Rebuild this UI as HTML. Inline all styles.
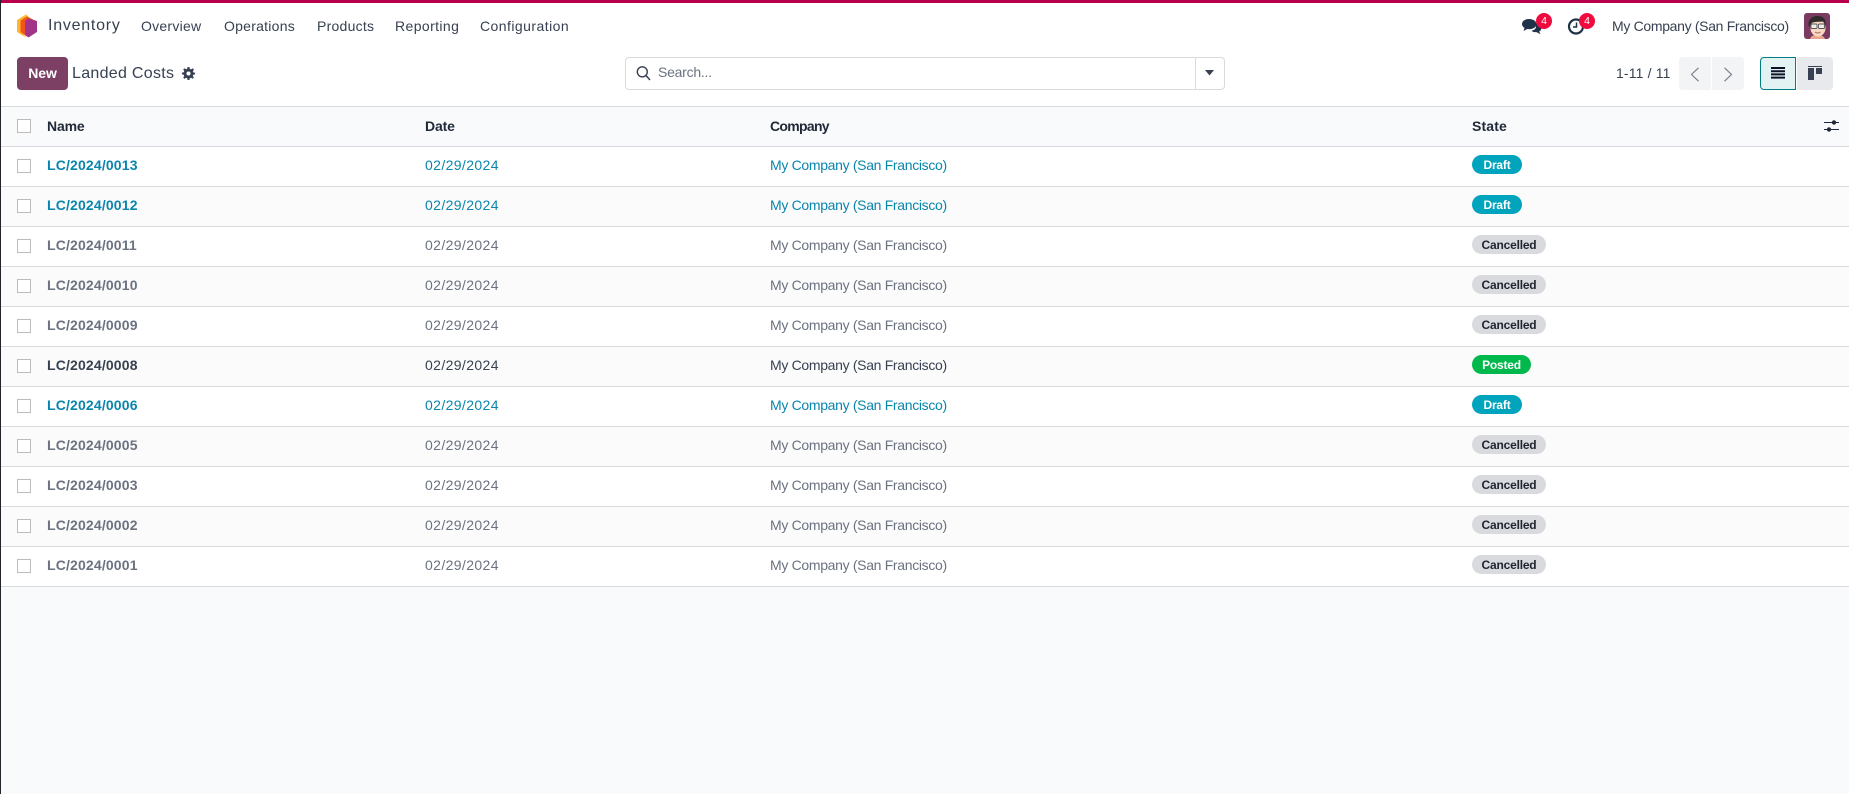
<!DOCTYPE html>
<html>
<head>
<meta charset="utf-8">
<title>Landed Costs</title>
<style>
html,body{margin:0;padding:0;width:1849px;height:794px;overflow:hidden;background:#f9fafb;font-family:"Liberation Sans",sans-serif;color:#374151}
*{box-sizing:border-box}
.a{position:absolute;white-space:nowrap}
#left{left:0;top:0;width:1px;height:794px;background:#23232b;z-index:9}
#top{left:0;top:0;width:1849px;height:3px;background:#b8004f;z-index:8}
#head{left:0;top:3px;width:1849px;height:104px;background:#fff;border-bottom:1px solid #d8dadd}
#hline{left:0;top:146px;width:1849px;height:1px;background:#d8dadd}
.nav{top:14px;height:24px;line-height:24px;font-size:14px;color:#374151;letter-spacing:.25px}
.btn{background:#f3f4f6;border-radius:0}
.row{left:0;width:1849px;height:40px;border-bottom:1px solid #d8dadd;background:#fff}
.row.e{background:#fbfbfb}
.cb{left:17px;top:12px;width:14px;height:14px;border:1px solid #bcbcbc;background:#fff}
.t{top:8px;height:20px;line-height:20px;font-size:14px}
.n{left:47px;font-weight:bold;letter-spacing:.16px}
.d{left:425px;letter-spacing:.38px}
.c{left:770px;letter-spacing:-.32px}
.dr{color:#0a86ad}
.ca{color:#6b7280}
.po{color:#374151}
.b{left:1472px;top:8px;height:19px;line-height:20px;border-radius:10px;font-size:12px;font-weight:bold;text-align:center;letter-spacing:-.2px}
.bd{width:50px;background:#00a4bd;color:#fff}
.bc{width:74px;background:#d8dadd;color:#1f2430}
.bp{width:59px;background:#00b84c;color:#fff}
.hd{top:116px;height:20px;line-height:20px;font-size:14px;font-weight:bold;color:#1f2937}
.badge{width:16px;height:16px;border-radius:50%;background:#ef0b3d;color:#fff;font-size:10.5px;line-height:16px;text-align:center}
</style>
</head>
<body>
<div class="a" id="left"></div>
<div class="a" id="top"></div>
<div class="a" id="head"></div>

<!-- logo -->
<svg class="a" style="left:17px;top:14px" width="21" height="24" viewBox="0 0 21 24">
<path d="M0 6 9 0.500 13 4 6 19 9 23.500 0 18Z" fill="#fcb72c"/>
<path d="M3.500 6.500 10 2.500 18 6.500V18L10 22.500 3.500 18Z" fill="#f2541b"/>
<path d="M8 7 11.500 4.500 20 7V18L11.500 23.500 8 21Z" fill="#a1338a"/>
</svg>
<div class="a nav" style="left:48px;font-size:16px;letter-spacing:.75px">Inventory</div>
<div class="a nav" style="left:141px">Overview</div>
<div class="a nav" style="left:224px">Operations</div>
<div class="a nav" style="left:317px">Products</div>
<div class="a nav" style="left:395px;letter-spacing:.4px">Reporting</div>
<div class="a nav" style="left:480px;letter-spacing:.45px">Configuration</div>

<!-- systray -->
<svg class="a" style="left:1521px;top:17px" width="22" height="18" viewBox="0 0 22 18">
<path d="M14 6.500c3.500.2 6.500 1.800 6.500 4.500 0 1.500-1 2.700-2.300 3.500l1.300 2.800-4-2.200c-2 .2-4-.3-5-1.400 3.500-.5 6-3.300 3.500-7.200Z" fill="#1f3247"/>
<path d="M8 2C3.800 2 1 4.300 1 7c0 1.700 1 3 2.500 3.900L2.500 14l3.700-2c4.800.8 9.300-1.300 9.300-5C15.500 4.300 12.200 2 8 2Z" fill="#1f3247"/>
</svg>
<div class="a badge" style="left:1536px;top:13px">4</div>
<svg class="a" style="left:1567px;top:17px" width="19" height="19" viewBox="0 0 19 19">
<circle cx="9" cy="9.500" r="7" fill="none" stroke="#1f3247" stroke-width="2.200"/>
<path d="M9.500 5.500V10H6" fill="none" stroke="#1f3247" stroke-width="1.500"/>
</svg>
<div class="a badge" style="left:1579px;top:13px">4</div>
<div class="a nav" style="left:1612px;letter-spacing:-.32px">My Company (San Francisco)</div>
<svg class="a" style="left:1804px;top:13px" width="26" height="26" viewBox="0 0 26 26">
<rect width="26" height="26" rx="3" fill="#7a3a62"/>
<path d="M6 26c1-3 3-4 7-4s7 1 8 4Z" fill="#e9a68d"/>
<ellipse cx="14" cy="15" rx="7.500" ry="8.500" fill="#f8d9c2"/>
<path d="M5 14C3 7 8 3 13.500 3c6 0 9 3 8 10l-2-4.500C15 9 10 8.500 7.500 10Z" fill="#2f2a2c"/>
<rect x="7" y="11" width="6" height="4.500" rx="1" fill="#eeeee9" stroke="#555" stroke-width=".9"/>
<rect x="14.500" y="11" width="6" height="4.500" rx="1" fill="#eeeee9" stroke="#555" stroke-width=".9"/>
<path d="M11 19c1.500 1.300 4 1.300 5.500 0" stroke="#b06a58" stroke-width="1" fill="none"/>
</svg>

<!-- control panel -->
<div class="a" style="left:17px;top:57px;width:51px;height:33px;border-radius:4px;background:#7c4065;color:#fff;font-size:14px;font-weight:bold;line-height:32px;text-align:center;letter-spacing:-.1px">New</div>
<div class="a" style="left:72px;top:62px;height:24px;line-height:24px;font-size:16px;letter-spacing:.3px;color:#374151">Landed Costs</div>
<svg class="a" style="left:182px;top:67px" width="13" height="13" viewBox="0 0 14 14">
<path d="M6 0h2l.4 2 1.300.5L11.500 1.400 12.900 2.800 11.700 4.500 12.200 5.800 14 6.200V8L12.100 8.400 11.600 9.700 12.800 11.300 11.400 12.700 9.700 11.600 8.400 12.100 8 14H6L5.600 12.100 4.300 11.600 2.700 12.800 1.300 11.400 2.400 9.700 1.900 8.400 0 8V6L1.900 5.600 2.400 4.300 1.300 2.700 2.700 1.300 4.300 2.400 5.600 1.900Z" fill="#374151"/>
<circle cx="7" cy="7" r="2.200" fill="#fff"/>
</svg>

<!-- search -->
<div class="a" style="left:625px;top:57px;width:600px;height:33px;border:1px solid #d8dadd;border-radius:4px;background:#fff"></div>
<div class="a" style="left:1195px;top:57px;width:1px;height:33px;background:#d8dadd"></div>
<svg class="a" style="left:636px;top:65px" width="15" height="16" viewBox="0 0 15 16">
<circle cx="6.300" cy="6.800" r="5" fill="none" stroke="#374151" stroke-width="1.400"/>
<path d="M10 10.500 14 15" stroke="#374151" stroke-width="1.500"/>
</svg>
<div class="a" style="left:658px;top:61px;height:22px;line-height:22px;font-size:14px;color:#6b7280;letter-spacing:-.25px">Search...</div>
<svg class="a" style="left:1205px;top:70px" width="9" height="6" viewBox="0 0 9 6"><path d="M0 0H9L4.500 5.500Z" fill="#374151"/></svg>

<!-- pager -->
<div class="a" style="left:1616px;top:62px;height:22px;line-height:22px;font-size:14px;color:#374151;letter-spacing:.15px">1-11 / 11</div>
<div class="a btn" style="left:1679px;top:57px;width:32px;height:33px;border-radius:4px 0 0 4px"></div>
<div class="a btn" style="left:1712px;top:57px;width:32px;height:33px;border-radius:0 4px 4px 0"></div>
<svg class="a" style="left:1690px;top:67px" width="10" height="15" viewBox="0 0 10 15"><path d="M8.500 .8 1.500 7.500 8.500 14.200" fill="none" stroke="#7b818c" stroke-width="1.200"/></svg>
<svg class="a" style="left:1723px;top:67px" width="10" height="15" viewBox="0 0 10 15"><path d="M1.500 .8 8.500 7.500 1.500 14.200" fill="none" stroke="#7b818c" stroke-width="1.200"/></svg>

<!-- view switch -->
<div class="a" style="left:1760px;top:57px;width:36px;height:33px;background:#e3f3f3;border:1px solid #017e84;border-radius:4px 0 0 4px"></div>
<div class="a" style="left:1797px;top:57px;width:36px;height:33px;background:#e7e9ed;border-radius:0 4px 4px 0"></div>
<svg class="a" style="left:1771px;top:67px" width="14" height="12" viewBox="0 0 14 12"><path d="M0 0h14v2H0zM0 3.200h14v2H0zM0 6.400h14v2H0zM0 9.600h14v2H0z" fill="#0d1326"/></svg>
<svg class="a" style="left:1808px;top:66px" width="14" height="14" viewBox="0 0 14 14"><path d="M0 0h14v1H0z" fill="#374151"/><path d="M0 2h6v12H0zM8 2h6v6H8z" fill="#374151"/></svg>

<!-- table header -->
<div class="a" id="hline"></div>
<div class="a" style="left:17px;top:119px;width:14px;height:14px;border:1px solid #bcbcbc;background:#fff"></div>
<div class="a hd" style="left:47px;letter-spacing:-.15px">Name</div>
<div class="a hd" style="left:425px;letter-spacing:-.15px">Date</div>
<div class="a hd" style="left:770px;letter-spacing:-.7px">Company</div>
<div class="a hd" style="left:1472px;letter-spacing:.15px">State</div>
<svg class="a" style="left:1824px;top:119px" width="15" height="14" viewBox="0 0 15 14">
<path d="M0 3.500h15M0 10.500h15" stroke="#1f2937" stroke-width="1"/>
<circle cx="10" cy="3.500" r="2.200" fill="#1f2937"/>
<circle cx="5" cy="10.500" r="2.200" fill="#1f2937"/>
</svg>

<!-- rows -->
<div class="a row" style="top:147px"><div class="a cb"></div><div class="a t n dr">LC/2024/0013</div><div class="a t d dr">02/29/2024</div><div class="a t c dr">My Company (San Francisco)</div><div class="a b bd">Draft</div></div>
<div class="a row e" style="top:187px"><div class="a cb"></div><div class="a t n dr">LC/2024/0012</div><div class="a t d dr">02/29/2024</div><div class="a t c dr">My Company (San Francisco)</div><div class="a b bd">Draft</div></div>
<div class="a row" style="top:227px"><div class="a cb"></div><div class="a t n ca">LC/2024/0011</div><div class="a t d ca">02/29/2024</div><div class="a t c ca">My Company (San Francisco)</div><div class="a b bc">Cancelled</div></div>
<div class="a row e" style="top:267px"><div class="a cb"></div><div class="a t n ca">LC/2024/0010</div><div class="a t d ca">02/29/2024</div><div class="a t c ca">My Company (San Francisco)</div><div class="a b bc">Cancelled</div></div>
<div class="a row" style="top:307px"><div class="a cb"></div><div class="a t n ca">LC/2024/0009</div><div class="a t d ca">02/29/2024</div><div class="a t c ca">My Company (San Francisco)</div><div class="a b bc">Cancelled</div></div>
<div class="a row e" style="top:347px"><div class="a cb"></div><div class="a t n po">LC/2024/0008</div><div class="a t d po">02/29/2024</div><div class="a t c po">My Company (San Francisco)</div><div class="a b bp">Posted</div></div>
<div class="a row" style="top:387px"><div class="a cb"></div><div class="a t n dr">LC/2024/0006</div><div class="a t d dr">02/29/2024</div><div class="a t c dr">My Company (San Francisco)</div><div class="a b bd">Draft</div></div>
<div class="a row e" style="top:427px"><div class="a cb"></div><div class="a t n ca">LC/2024/0005</div><div class="a t d ca">02/29/2024</div><div class="a t c ca">My Company (San Francisco)</div><div class="a b bc">Cancelled</div></div>
<div class="a row" style="top:467px"><div class="a cb"></div><div class="a t n ca">LC/2024/0003</div><div class="a t d ca">02/29/2024</div><div class="a t c ca">My Company (San Francisco)</div><div class="a b bc">Cancelled</div></div>
<div class="a row e" style="top:507px"><div class="a cb"></div><div class="a t n ca">LC/2024/0002</div><div class="a t d ca">02/29/2024</div><div class="a t c ca">My Company (San Francisco)</div><div class="a b bc">Cancelled</div></div>
<div class="a row" style="top:547px"><div class="a cb"></div><div class="a t n ca">LC/2024/0001</div><div class="a t d ca">02/29/2024</div><div class="a t c ca">My Company (San Francisco)</div><div class="a b bc">Cancelled</div></div>
</body>
</html>
